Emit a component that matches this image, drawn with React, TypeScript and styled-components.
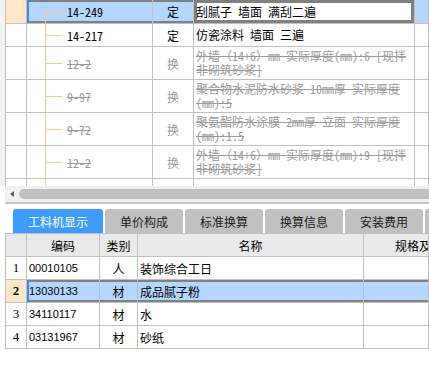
import styled, { createGlobalStyle, css } from "styled-components";

const GlobalStyle = createGlobalStyle`
  html, body { margin: 0; padding: 0; background: #fff; }
  body {
    font-family: "Noto Sans Mono CJK SC", "Noto Sans CJK SC", "Liberation Mono", monospace;
    font-size: 12px;
    color: #000;
  }
  * { box-sizing: border-box; }
`;

const Page = styled.div`
  width: 429px;
  height: 365px;
  overflow: hidden;
  display: flex;
  flex-direction: column;
  background: #fff;
`;

const TopPane = styled.div`
  background: #f3f3f3;
  padding-left: 5px;
`;

const Grid = styled.div<{ $height?: number; $ruled?: boolean }>`
  background: #fff;
  border-left: 1px solid #c0c0c0;
  border-top: ${(p) => (p.$ruled ? "1px solid #c0c0c0" : "none")};
  height: ${(p) => (p.$height ? `${p.$height}px` : "auto")};
  overflow: hidden;
`;

const Row = styled.div<{ $h: number }>`
  display: flex;
  height: ${(p) => p.$h}px;
`;

const selected = css`
  background: #b5d6fe;
  box-shadow: inset 0 2px 0 #808080, inset 0 -2px 0 #808080;
`;

const Cell = styled.div<{ $w?: number; $sel?: boolean; $center?: boolean; $tint?: boolean }>`
  flex: ${(p) => (p.$w ? `0 0 ${p.$w}px` : "1 1 auto")};
  display: flex;
  align-items: center;
  justify-content: ${(p) => (p.$center ? "center" : "flex-start")};
  border-right: 1px solid #c0c0c0;
  border-bottom: 1px solid #c0c0c0;
  white-space: nowrap;
  overflow: hidden;
  background: ${(p) => (p.$tint ? "#b5d6fe" : "transparent")};
  ${(p) => p.$sel && selected}
`;

const NumCell = styled(Cell)<{ $cur?: boolean }>`
  flex: 0 0 21px;
  justify-content: center;
  font-family: "Liberation Serif", serif;
  font-size: 13px;
  font-weight: ${(p) => (p.$cur ? "bold" : "normal")};
  background: ${(p) => (p.$cur ? "#ffe6c6" : "#fff")};
`;

const MarkCell = styled(Cell)`
  box-shadow: ${(p) =>
    p.$sel
      ? "inset 2px 0 0 #3a8ee8, inset 0 2px 0 #808080, inset 0 -2px 0 #808080"
      : "none"};
`;

const TreeCell = styled(MarkCell)<{ $first?: boolean }>`
  position: relative;
  padding-left: 40px;
  &::before {
    content: "";
    position: absolute;
    left: 18px;
    top: ${(p) => (p.$first ? "12px" : "0")};
    bottom: 0;
    width: 1px;
    background: #fcc97c;
  }
  &::after {
    content: "";
    position: absolute;
    left: 18px;
    top: 50%;
    width: 17px;
    height: 1px;
    background: #fcc97c;
  }
`;

const Struck = styled.span<{ $gone?: boolean; $strike?: boolean }>`
  color: ${(p) => (p.$gone ? "#9a9a9a" : "#000")};
  text-decoration: ${(p) => (p.$gone && p.$strike ? "line-through" : "none")};
`;

const NameCell = styled(Cell)<{ $active?: boolean }>`
  flex-direction: column;
  align-items: flex-start;
  justify-content: center;
  padding: 0 3px 0 2px;
  line-height: 14px;
  ${(p) =>
    p.$active &&
    css`
      background: #fff;
      box-shadow: inset 0 0 0 3px #808080;
    `}
`;

const ScrollBar = styled.div`
  height: 18px;
  margin-left: 5px;
  background: #f0f0f0;
  border-bottom: 2px solid #c4c4c4;
  display: flex;
  align-items: center;
  gap: 5px;
  padding-left: 5px;
`;

const Arrow = styled.div`
  width: 0;
  height: 0;
  border-top: 3px solid transparent;
  border-bottom: 3px solid transparent;
  border-right: 4px solid #606060;
`;

const Thumb = styled.div`
  flex: 1;
  height: 10px;
  border-radius: 5px 0 0 5px;
  background: #c1c1c1;
`;

const TabBar = styled.div`
  display: flex;
  gap: 2px;
  padding: 5px 0 0 13px;
  height: 29px;
  background: #fff;
  overflow: hidden;
`;

const Tab = styled.div<{ $w: number; $active?: boolean }>`
  flex: 0 0 ${(p) => p.$w}px;
  height: 24px;
  border-radius: 3px 3px 0 0;
  display: flex;
  align-items: center;
  justify-content: center;
  font-family: "Noto Sans CJK SC", sans-serif;
  font-size: 12px;
  white-space: nowrap;
  background: ${(p) => (p.$active ? "#3f9cff" : "#c0c0c0")};
  color: ${(p) => (p.$active ? "#fff" : "#1a1a1a")};
`;

const BottomPane = styled.div`
  padding-left: 5px;
  background: #fff;
`;

const HeadCell = styled(Cell)<{ $indent?: number }>`
  background: #e9e9e9;
  justify-content: ${(p) => (p.$indent ? "flex-start" : "center")};
  padding-left: ${(p) => p.$indent ?? 0}px;
  font-family: "Noto Sans CJK SC", sans-serif;
`;

const HeadNum = styled(HeadCell)`
  flex: 0 0 21px;
`;

const Code = styled.span`
  padding-left: 2px;
  font-family: "Liberation Sans", sans-serif;
  font-size: 11px;
`;

const Name = styled.span`
  padding-left: 2px;
`;

const topRows = [
  { code: "14-249", type: "定", name: ["刮腻子 墙面 满刮二遍"], h: 24 },
  { code: "14-217", type: "定", name: ["仿瓷涂料 墙面 三遍"], h: 23 },
  { code: "12-2", type: "换", name: ["外墙（14+6）mm 实际厚度(mm):6 [现拌", "非砌筑砂浆]"], h: 33, gone: true },
  { code: "9-97", type: "换", name: ["聚合物水泥防水砂浆 10mm厚 实际厚度", "(mm):5"], h: 33, gone: true },
  { code: "9-72", type: "换", name: ["聚氨酯防水涂膜 2mm厚 立面 实际厚度", "(mm):1.5"], h: 33, gone: true },
  { code: "12-2", type: "换", name: ["外墙（14+6）mm 实际厚度(mm):9 [现拌", "非砌筑砂浆]"], h: 33, gone: true },
  { code: "12-5", type: "换", name: ["墙面界面剂 实际厚度(mm):2"], h: 33, gone: true },
];

const tabs = [
  { label: "工料机显示", w: 90 },
  { label: "单价构成", w: 78 },
  { label: "标准换算", w: 78 },
  { label: "换算信息", w: 78 },
  { label: "安装费用", w: 78 },
  { label: "特征及内容", w: 78 },
];

const materials = [
  { code: "00010105", type: "人", name: "装饰综合工日" },
  { code: "13030133", type: "材", name: "成品腻子粉" },
  { code: "34110117", type: "材", name: "水" },
  { code: "03131967", type: "材", name: "砂纸" },
];

export default function App() {
  return (
    <Page>
      <GlobalStyle />
      <TopPane>
        <Grid $height={186}>
          {topRows.map((r, i) => {
            const sel = i === 0;
            return (
              <Row key={i} $h={r.h}>
                <NumCell $cur={sel} />
                <TreeCell $w={126} $sel={sel} $first={i === 0}>
                  <Struck $gone={r.gone} $strike>{r.code}</Struck>
                </TreeCell>
                <Cell $w={41} $sel={sel} $center>
                  <Struck $gone={r.gone}>{r.type}</Struck>
                </Cell>
                <NameCell $w={221} $active={sel}>
                  {r.name.map((line) => (
                    <Struck key={line} $gone={r.gone} $strike>{line}</Struck>
                  ))}
                </NameCell>
                <Cell $tint={sel} />
              </Row>
            );
          })}
        </Grid>
      </TopPane>
      <ScrollBar>
        <Arrow />
        <Thumb />
      </ScrollBar>
      <TabBar>
        {tabs.map((t, i) => (
          <Tab key={t.label} $w={t.w} $active={i === 0}>
            {t.label}
          </Tab>
        ))}
      </TabBar>
      <BottomPane>
        <Grid $ruled>
          <Row $h={23}>
            <HeadNum />
            <HeadCell $w={73}>编码</HeadCell>
            <HeadCell $w={38}>类别</HeadCell>
            <HeadCell $w={226}>名称</HeadCell>
            <HeadCell $indent={31}>规格及型号</HeadCell>
          </Row>
          {materials.map((m, i) => {
            const sel = i === 1;
            return (
              <Row key={m.code} $h={23}>
                <NumCell $cur={sel}>{i + 1}</NumCell>
                <MarkCell $w={73} $sel={sel}>
                  <Code>{m.code}</Code>
                </MarkCell>
                <Cell $w={38} $sel={sel} $center>{m.type}</Cell>
                <Cell $w={226} $sel={sel}>
                  <Name>{m.name}</Name>
                </Cell>
                <Cell $sel={sel} />
              </Row>
            );
          })}
        </Grid>
      </BottomPane>
    </Page>
  );
}
